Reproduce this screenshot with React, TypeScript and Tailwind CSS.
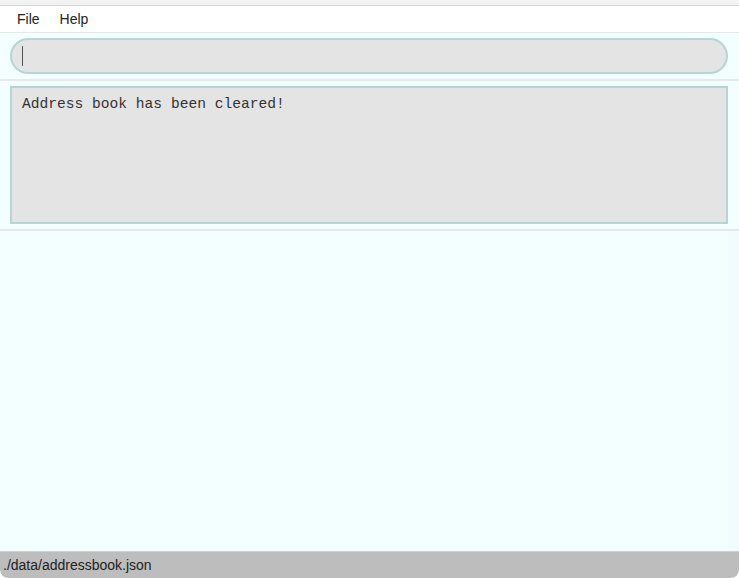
export default function App() {
  return (
    <div className="w-[739px] h-[578px] flex flex-col bg-[#f2feff] font-['Liberation_Sans',Arial,sans-serif] overflow-hidden rounded-b-[8px]">
      {/* Window top strip */}
      <div className="h-[6px] bg-[#f2f2f2] border-b border-[#d6d6d6]" />

      {/* Menu bar */}
      <div className="h-[27px] bg-white border-b border-[#e3e8e8] flex items-center gap-[20px] pl-[17px] text-[14px] text-[#222]">
        <span>File</span>
        <span>Help</span>
      </div>

      {/* Command box */}
      <div className="pt-[5px] pb-[5px] pl-[10px] pr-[11px] border-b-2 border-[#e6eaea]">
        <div className="h-[36px] rounded-[18px] border-2 border-[#b7d5d5] bg-[#e4e4e4] flex items-center pl-[10px]">
          <div className="w-px h-[20px] bg-[#555]" />
        </div>
      </div>

      {/* Result display */}
      <div className="pt-[5px] pb-[5px] pl-[10px] pr-[11px] border-b-2 border-[#e6eaea]">
        <div className="h-[138px] border-2 border-[#b7d5d5] bg-[#e4e4e4] pl-[10px] pt-[3px]">
          <span className="font-['Liberation_Mono','Courier_New',monospace] text-[14.6px] text-[#333]">
            Address book has been cleared!
          </span>
        </div>
      </div>

      {/* List area */}
      <div className="flex-1 flex">
        <div className="flex-1" />
        <div className="w-[11px] bg-[#f0fcfe]" />
      </div>

      {/* Status bar */}
      <div className="h-[27px] bg-[#bdbdbd] border-t border-[#d0d0d0] flex items-center pl-[3px] text-[14px] text-[#222] rounded-b-[8px]">
        ./data/addressbook.json
      </div>
    </div>
  );
}
